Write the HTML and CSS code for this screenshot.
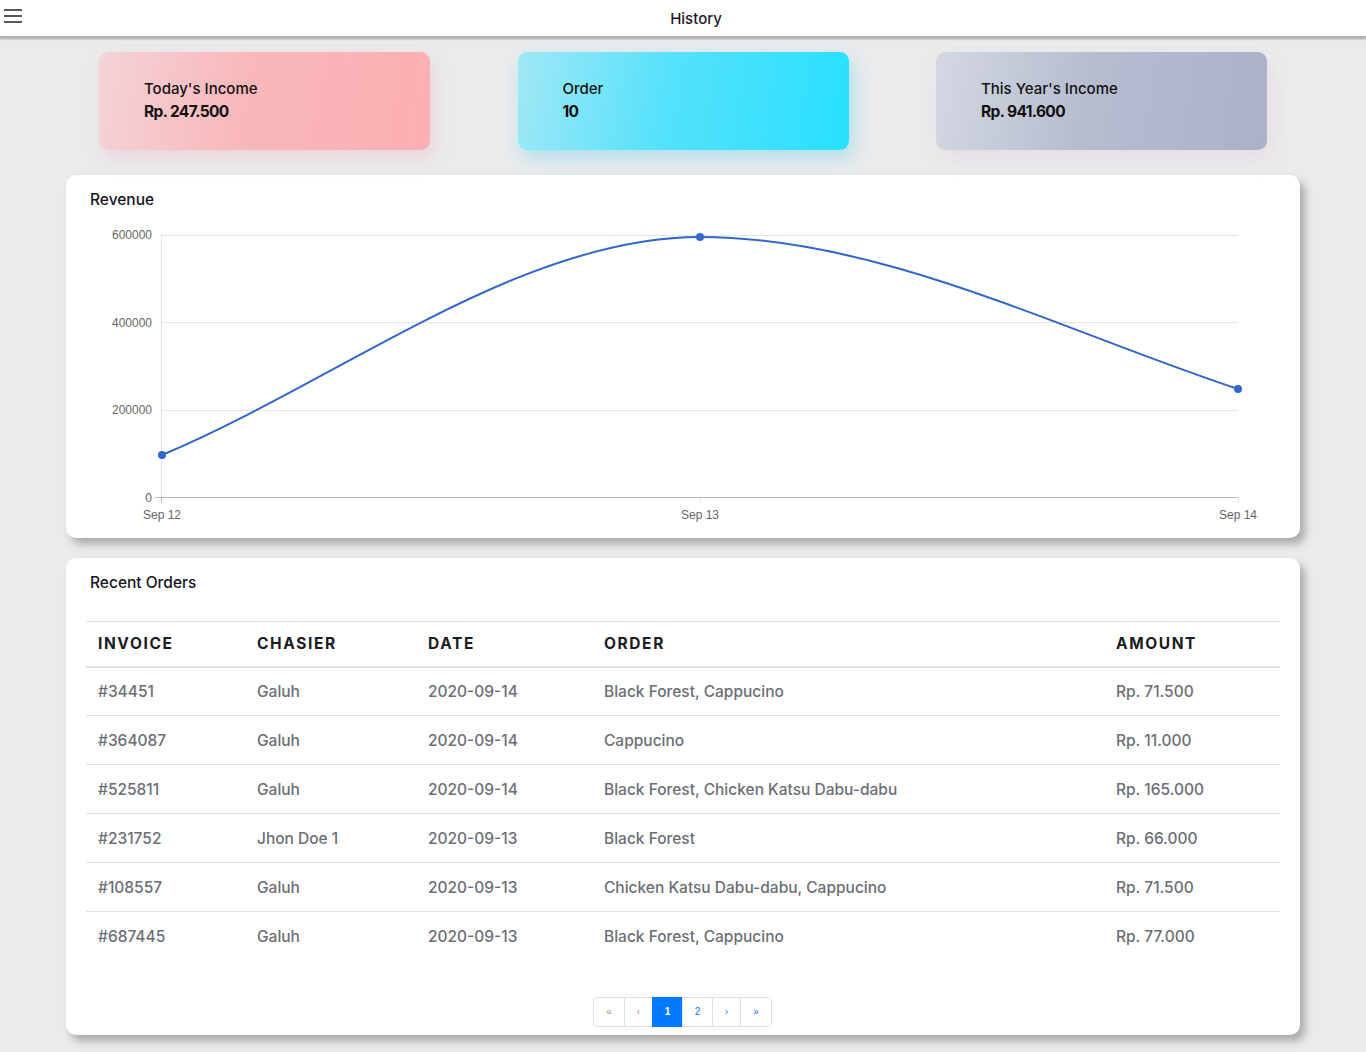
FILE: index.html
```html
<!DOCTYPE html>
<html lang="en">
<head>
<meta charset="UTF-8" />
<title>History</title>
<link rel="stylesheet" href="styles.css">
</head>
<body>

<header class="topbar">
  <button class="menu-btn" aria-label="menu">
    <svg width="18" height="14" viewBox="0 0 18 14"><path d="M0 1h18M0 7h18M0 13h18" stroke="#222" stroke-width="1.4"/></svg>
  </button>
  <h1 class="page-title">History</h1>
</header>

<main class="content">
  <section class="stats">
    <div class="stat stat-pink">
      <div class="stat-label">Today's Income</div>
      <div class="stat-value">Rp. 247.500</div>
    </div>
    <div class="stat stat-blue">
      <div class="stat-label">Order</div>
      <div class="stat-value">10</div>
    </div>
    <div class="stat stat-grey">
      <div class="stat-label">This Year's Income</div>
      <div class="stat-value">Rp. 941.600</div>
    </div>
  </section>

  <section class="card">
    <h2 class="card-title">Revenue</h2>
    <svg class="chart" viewBox="66 209 1234 321" width="1234" height="321">
      <g stroke="#e4e4e4" stroke-width="1">
        <line x1="161" y1="235.5" x2="1238" y2="235.5"/>
        <line x1="161" y1="322.5" x2="1238" y2="322.5"/>
        <line x1="161" y1="410.5" x2="1238" y2="410.5"/>
        <line x1="161.5" y1="235" x2="161.5" y2="497"/>
        <line x1="1238.5" y1="497" x2="1238.5" y2="503"/>
        <line x1="700.5" y1="497" x2="700.5" y2="503"/>
      </g>
      <g stroke="#bbb" stroke-width="1">
        <line x1="161" y1="497.5" x2="1238" y2="497.5"/>
        <line x1="155" y1="497.5" x2="161" y2="497.5"/>
        <line x1="161.5" y1="497" x2="161.5" y2="503"/>
      </g>
      <g class="axis" text-anchor="end">
        <text x="152" y="239">600000</text>
        <text x="152" y="327">400000</text>
        <text x="152" y="414">200000</text>
        <text x="152" y="502">0</text>
      </g>
      <g class="axis" text-anchor="middle">
        <text x="162" y="519">Sep 12</text>
        <text x="700" y="519">Sep 13</text>
        <text x="1238" y="519">Sep 14</text>
      </g>
      <path d="M162 455 C340 380 520 237 700 237 C880 237 1060 330 1238 389" fill="none" stroke="#3366cc" stroke-width="2"/>
      <g fill="#3366cc">
        <circle cx="162" cy="455" r="4"/>
        <circle cx="700" cy="237" r="4"/>
        <circle cx="1238" cy="389" r="4"/>
      </g>
    </svg>
  </section>

  <section class="card orders">
    <h2 class="card-title">Recent Orders</h2>
    <table class="orders-table">
      <thead>
        <tr>
          <th class="c-inv">Invoice</th>
          <th class="c-cas">Chasier</th>
          <th class="c-date">Date</th>
          <th class="c-ord">Order</th>
          <th class="c-amt">Amount</th>
        </tr>
      </thead>
      <tbody>
        <tr><td>#34451</td><td>Galuh</td><td>2020-09-14</td><td>Black Forest, Cappucino</td><td>Rp. 71.500</td></tr>
        <tr><td>#364087</td><td>Galuh</td><td>2020-09-14</td><td>Cappucino</td><td>Rp. 11.000</td></tr>
        <tr><td>#525811</td><td>Galuh</td><td>2020-09-14</td><td>Black Forest, Chicken Katsu Dabu-dabu</td><td>Rp. 165.000</td></tr>
        <tr><td>#231752</td><td>Jhon Doe 1</td><td>2020-09-13</td><td>Black Forest</td><td>Rp. 66.000</td></tr>
        <tr><td>#108557</td><td>Galuh</td><td>2020-09-13</td><td>Chicken Katsu Dabu-dabu, Cappucino</td><td>Rp. 71.500</td></tr>
        <tr><td>#687445</td><td>Galuh</td><td>2020-09-13</td><td>Black Forest, Cappucino</td><td>Rp. 77.000</td></tr>
      </tbody>
    </table>

    <nav class="pager">
      <a class="page-link edge muted">&laquo;</a>
      <a class="page-link step muted">&lsaquo;</a>
      <a class="page-link active">1</a>
      <a class="page-link">2</a>
      <a class="page-link step">&rsaquo;</a>
      <a class="page-link edge">&raquo;</a>
    </nav>
  </section>
</main>

</body>
</html>
```

FILE: styles.css
```css
* { box-sizing: border-box; }
body { margin: 0; background: #eaebed; font-family: "Inter", "Open Sans", sans-serif; color: #111; }

.topbar { height: 38px; background: #fff; display: flex; align-items: center; box-shadow: 0 1px 2px rgba(0,0,0,.3); border-bottom: 2px solid #b4b4b4; }
.menu-btn { width: 26px; height: 36px; border: 0; background: none; padding: 0 0 4px 4px; display: flex; align-items: center; }
.page-title { flex: 1; margin: 0; text-align: center; font-size: 15px; font-weight: 500; color: #1c1c28; }

.content { padding: 14px 66px 16px; }

.stats { display: flex; justify-content: space-between; padding: 0 33px; }
.stat { width: 331px; height: 98px; border-radius: 9px; padding: 27px 45px; }
.stat-label { font-size: 15px; font-weight: 500; line-height: 20px; }
.stat-value { font-size: 15.5px; font-weight: 700; line-height: 26px; letter-spacing: -0.6px; }
.stat-pink { background: linear-gradient(100deg, #f4d3d8 0%, #f9b7ba 45%, #fbafb2 100%); box-shadow: 4px 8px 18px rgba(240,170,185,.35); }
.stat-blue { background: linear-gradient(100deg, #a1e8f6 0%, #55e1fb 45%, #27e0ff 100%); box-shadow: 4px 8px 18px rgba(40,200,230,.3); }
.stat-grey { background: linear-gradient(100deg, #d4d8e2 0%, #b7bdcf 45%, #aab2c8 100%); box-shadow: 4px 8px 18px rgba(230,200,215,.4); }

.card { background: #fff; border-radius: 10px; margin-top: 25px; padding: 16px 20px 8px; box-shadow: 5px 6px 9px rgba(0,0,0,.28); }
.card + .card { margin-top: 20px; }
.card-title { margin: 0; padding-left: 4px; font-size: 15.5px; font-weight: 500; line-height: 18px; color: #15151f; }

.chart { display: block; margin: 0 -20px; }
.chart .axis { font-family: "Liberation Sans", Arial, sans-serif; font-size: 12px; fill: #666; }

.orders-table { width: 100%; border-collapse: collapse; margin-top: 29px; table-layout: fixed; }
.orders-table th { text-align: left; font-size: 15.5px; font-weight: 700; text-transform: uppercase; letter-spacing: 1.6px; color: #1b1b22; height: 45px; padding: 0 12px; border-top: 1px solid #dee2e6; border-bottom: 2px solid #dee2e6; }
.orders-table td { height: 49px; padding: 0 12px; font-size: 15.5px; font-weight: 500; color: #6b6e75; border-bottom: 1px solid #dee2e6; }
.orders-table tr:last-child td { border-bottom: 0; }
.c-inv { width: 159px; }
.c-cas { width: 171px; }
.c-date { width: 176px; }
.c-ord { width: 512px; }

.pager { display: flex; justify-content: center; margin-top: 36px; }
.page-link { width: 31px; height: 30px; display: flex; align-items: center; justify-content: center; font-size: 10px; color: #007bff; border: 1px solid #dee2e6; margin-left: -1px; font-family: "Liberation Sans", Arial, sans-serif; }
.page-link.step { width: 29px; }
.page-link.edge { width: 32px; }
.page-link:first-child { border-radius: 4px 0 0 4px; }
.page-link:last-child { border-radius: 0 4px 4px 0; }
.page-link.muted { color: #b58a6a; }
.page-link.active { background: #007bff; border-color: #007bff; color: #fff; font-weight: 700; }
```
